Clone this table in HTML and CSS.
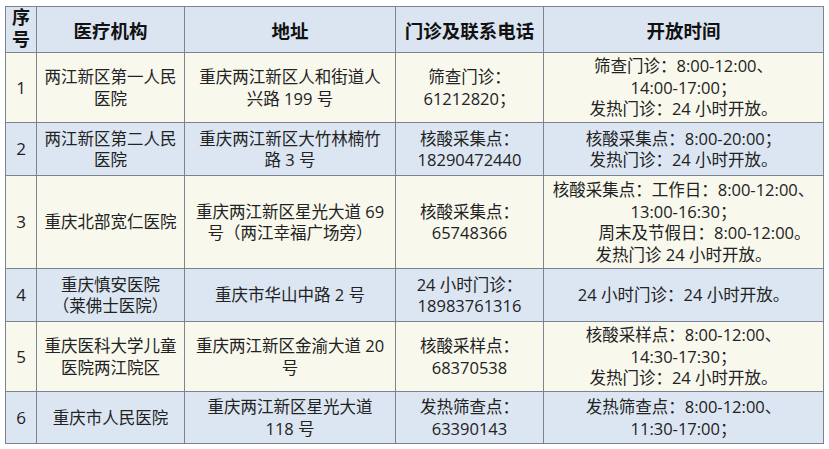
FILE: index.html
```html
<!DOCTYPE html>
<html lang="zh-CN">
<head>
<meta charset="utf-8">
<title>两江新区医疗机构</title>
<link rel="stylesheet" href="styles.css">
</head>
<body>
<table class="tbl">
  <colgroup>
    <col class="c-no">
    <col class="c-org">
    <col class="c-addr">
    <col class="c-tel">
    <col class="c-time">
  </colgroup>
  <thead>
    <tr class="r-head">
      <th class="h-no"><span class="h-vert">序号</span></th>
      <th>医疗机构</th>
      <th>地址</th>
      <th>门诊及联系电话</th>
      <th>开放时间</th>
    </tr>
  </thead>
  <tbody>
    <tr class="r1 cream">
      <td>1</td>
      <td>两江新区第一人民<br>医院</td>
      <td>重庆两江新区人和街道人<br>兴路 199 号</td>
      <td>筛查门诊：<br>61212820；</td>
      <td>筛查门诊：8:00-12:00、<br>14:00-17:00；<br>发热门诊：24 小时开放。</td>
    </tr>
    <tr class="r2 blue">
      <td>2</td>
      <td>两江新区第二人民<br>医院</td>
      <td>重庆两江新区大竹林楠竹<br>路 3 号</td>
      <td>核酸采集点：<br>18290472440</td>
      <td>核酸采集点：8:00-20:00；<br>发热门诊：24 小时开放。</td>
    </tr>
    <tr class="r3 cream">
      <td>3</td>
      <td>重庆北部宽仁医院</td>
      <td>重庆两江新区星光大道 69<br>号（两江幸福广场旁）</td>
      <td>核酸采集点：<br>65748366</td>
      <td>核酸采集点：工作日：8:00-12:00、<br>13:00-16:30；<br><span class="indent">周末及节假日：8:00-12:00。</span><br>发热门诊 24 小时开放。</td>
    </tr>
    <tr class="r4 blue">
      <td>4</td>
      <td>重庆慎安医院<br>（莱佛士医院）</td>
      <td>重庆市华山中路 2 号</td>
      <td>24 小时门诊：<br>18983761316</td>
      <td>24 小时门诊：24 小时开放。</td>
    </tr>
    <tr class="r5 cream">
      <td>5</td>
      <td>重庆医科大学儿童<br>医院两江院区</td>
      <td>重庆两江新区金渝大道 20<br>号</td>
      <td>核酸采样点：<br>68370538</td>
      <td>核酸采样点：8:00-12:00、<br>14:30-17:30；<br>发热门诊：24 小时开放。</td>
    </tr>
    <tr class="r6 blue">
      <td>6</td>
      <td>重庆市人民医院</td>
      <td>重庆两江新区星光大道<br>118 号</td>
      <td>发热筛查点：<br>63390143</td>
      <td>发热筛查点：8:00-12:00、<br>11:30-17:00；</td>
    </tr>
  </tbody>
</table>
</body>
</html>
```

FILE: styles.css
```css
html, body {
  margin: 0;
  padding: 0;
  background: #ffffff;
}

body {
  font-family: "Open Sans", "Noto Sans CJK SC", sans-serif;
  color: #222222;
}

.tbl {
  margin: 6px 0 0 5px;
  width: 818px;
  border-collapse: collapse;
  table-layout: fixed;
  border: 1.5px solid #7d838e;
}

.c-no { width: 31px; }
.c-org { width: 148px; }
.c-addr { width: 211px; }
.c-tel { width: 148px; }
.c-time { width: 280px; }

.tbl th,
.tbl td {
  border: 1.5px solid #7d838e;
  text-align: center;
  vertical-align: middle;
  padding: 0 2px;
  white-space: nowrap;
  overflow: visible;
}

.tbl th {
  background: #dbe5f1;
  font-family: "Noto Sans CJK SC", sans-serif;
  font-weight: 700;
  font-size: 18.5px;
  line-height: 22px;
  color: #111111;
}

.tbl th.h-no {
  padding: 0;
  font-size: 18px;
}

.h-vert {
  display: inline-block;
  writing-mode: vertical-rl;
  text-orientation: upright;
  letter-spacing: 4px;
  line-height: 24px;
  vertical-align: middle;
}

.tbl td {
  font-size: 16.5px;
  line-height: 21.5px;
}

.tbl td:first-child {
  font-size: 17px;
}

.cream td { background: #f8f8ed; }
.blue td { background: #dce6f2; }

.r-head { height: 46px; }
.r1 { height: 70px; }
.r2 { height: 53px; }
.r3 { height: 93px; }
.r4 { height: 53px; }
.r5 { height: 70px; }
.r6 { height: 52px; }

.indent {
  padding-left: 42px;
}
```
